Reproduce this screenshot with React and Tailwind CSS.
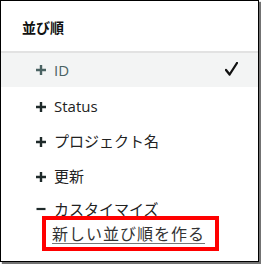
import React from "react";

const font = { fontFamily: '"Open Sans", "Noto Sans CJK JP", sans-serif' };

function Plus({ color = "#1f2a2a" }) {
  return (
    <svg width="10" height="10" viewBox="0 0 10 10" className="shrink-0">
      <path d="M5 0V10M0 5H10" stroke={color} strokeWidth="2.4" />
    </svg>
  );
}

function Minus() {
  return (
    <svg width="10" height="10" viewBox="0 0 10 10" className="shrink-0">
      <path d="M0.5 5H9.5" stroke="#1f2a2a" strokeWidth="2.2" />
    </svg>
  );
}

function Row({ label, active, h = "h-[35px]" }) {
  return (
    <div
      className={`flex items-center ${h} pl-[35px] pr-[20px] ${active ? "bg-[#f3f4f4] text-[#4a6262]" : "text-[#222]"}`}
    >
      <Plus color={active ? "#4a6262" : "#1f2a2a"} />
      <span className="ml-[8px] text-[15px] leading-none">{label}</span>
      {active && (
        <svg width="13" height="14" viewBox="0 0 13 14" className="ml-auto mt-[-2px]">
          <path d="M1 8 L4.6 12.5 L12 1" stroke="#111" strokeWidth="2.3" fill="none" strokeLinecap="round" strokeLinejoin="round" />
        </svg>
      )}
    </div>
  );
}

export default function App() {
  return (
    <div className="w-[261px] h-[264px] bg-white" style={font}>
      <div className="w-[259px] h-[262px] border border-black bg-white shadow-[2px_2px_1px_rgba(0,0,0,0.55)] flex flex-col">
        <div className="h-[52px] flex items-center pl-[21px] pt-[2px] text-[14px] font-bold text-[#111] border-b-2 border-[#e2e2e2]">
          並び順
        </div>
        <Row label="ID" active h="h-[34px]" />
        <div className="h-[2px]" />
        <Row label="Status" />
        <Row label="プロジェクト名" />
        <Row label="更新" />
        <div className="flex items-center h-[18px] mt-[6px] pl-[35px] text-[#222]">
          <Minus />
          <span className="ml-[8px] text-[15px] leading-none">カスタイマイズ</span>
        </div>
        <div className="ml-[41px] mt-[-2px] w-[177px] h-[35px] border-4 border-[#ff0000] flex items-center pl-[6px]">
          <span className="text-[16px] leading-none text-[#333] underline decoration-[#777] underline-offset-[3px] tracking-[1px]">
            新しい並び順を作る
          </span>
        </div>
      </div>
    </div>
  );
}
